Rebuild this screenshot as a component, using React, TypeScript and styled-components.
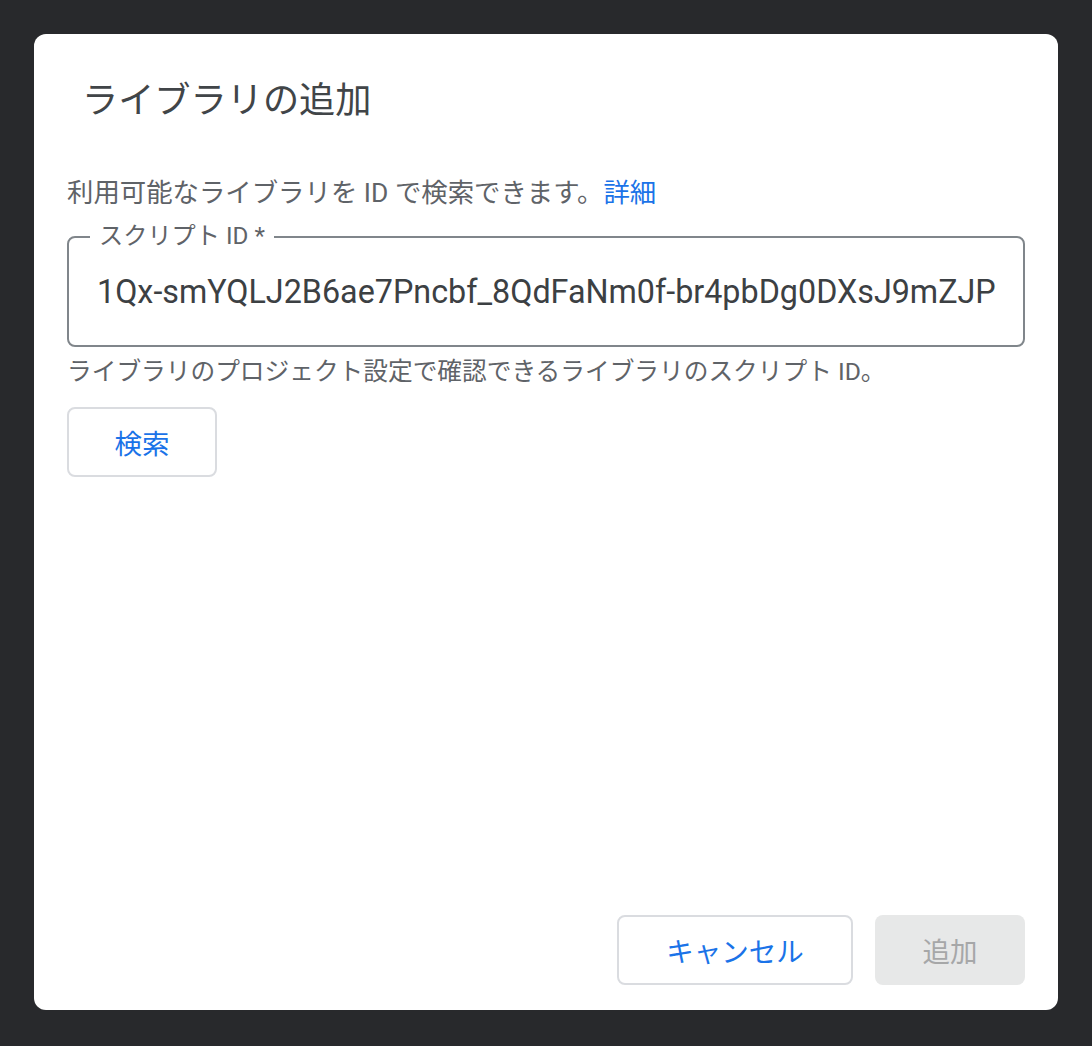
import React from "react";
import styled, { createGlobalStyle } from "styled-components";

const GlobalStyle = createGlobalStyle`
  html, body {
    margin: 0;
    padding: 0;
    background: #28292c;
  }
  body {
    font-family: Roboto, "Noto Sans CJK JP", sans-serif;
    -webkit-font-smoothing: antialiased;
  }
  * { box-sizing: border-box; }
`;

const Page = styled.div`
  padding: 34px;
  width: 1092px;
  min-height: 1046px;
`;

const Dialog = styled.div`
  width: 1024px;
  height: 976px;
  background: #ffffff;
  border-radius: 12px;
  padding: 43px 33px 25px 33px;
  display: flex;
  flex-direction: column;
`;

const Title = styled.h2`
  margin: 0;
  padding-left: 15px;
  font-family: Roboto, "Noto Sans CJK JP", sans-serif;
  font-weight: 400;
  font-size: 36.2px;
  line-height: 48px;
  color: #414548;
`;

const Intro = styled.p`
  margin: 50px 0 0 0;
  font-size: 26.4px;
  line-height: 36px;
  color: #5f6368;
`;

const Link = styled.a`
  color: #1a73e8;
  text-decoration: none;
`;

const Field = styled.div`
  position: relative;
  margin-top: 25px;
  height: 111px;
  border: 2px solid #80868b;
  border-radius: 8px;
  display: flex;
`;

const FieldLabel = styled.label`
  position: absolute;
  top: -16px;
  left: 21px;
  padding: 0 9px;
  background: #ffffff;
  font-size: 24.2px;
  line-height: 28px;
  color: #5f6368;
`;

const Input = styled.input`
  flex: 1;
  min-width: 0;
  border: none;
  outline: none;
  background: transparent;
  padding: 0 27px 0 28px;
  font-family: Roboto, "Noto Sans CJK JP", sans-serif;
  font-size: 32.3px;
  color: #3c4043;
`;

const Hint = styled.p`
  margin: 9px 0 0 0;
  font-size: 24.7px;
  line-height: 32px;
  color: #5f6368;
`;

const Button = styled.button<{ $width: number; $disabled?: boolean }>`
  width: ${(p) => p.$width}px;
  height: 70px;
  border-radius: 8px;
  font-family: Roboto, "Noto Sans CJK JP", sans-serif;
  font-size: 27.5px;
  cursor: pointer;
  border: ${(p) => (p.$disabled ? "none" : "2px solid #dadce0")};
  background: ${(p) => (p.$disabled ? "#e7e8e8" : "#ffffff")};
  color: ${(p) => (p.$disabled ? "#a6a7a8" : "#1a73e8")};
`;

const SearchRow = styled.div`
  margin-top: 19px;
  display: flex;
`;

const Spacer = styled.div`
  flex: 1;
`;

const Footer = styled.div`
  display: flex;
  justify-content: flex-end;
  gap: 22px;
`;

export default function App() {
  return (
    <>
      <GlobalStyle />
      <Page>
        <Dialog>
          <Title>ライブラリの追加</Title>
          <Intro>
            利用可能なライブラリを ID で検索できます。<Link href="#">詳細</Link>
          </Intro>
          <Field>
            <FieldLabel htmlFor="script-id">スクリプト ID *</FieldLabel>
            <Input
              id="script-id"
              readOnly
              value="1Qx-smYQLJ2B6ae7Pncbf_8QdFaNm0f-br4pbDg0DXsJ9mZJPdFcIEgw7"
            />
          </Field>
          <Hint>ライブラリのプロジェクト設定で確認できるライブラリのスクリプト ID。</Hint>
          <SearchRow>
            <Button $width={150}>検索</Button>
          </SearchRow>
          <Spacer />
          <Footer>
            <Button $width={236}>キャンセル</Button>
            <Button $width={150} $disabled disabled>
              追加
            </Button>
          </Footer>
        </Dialog>
      </Page>
    </>
  );
}
